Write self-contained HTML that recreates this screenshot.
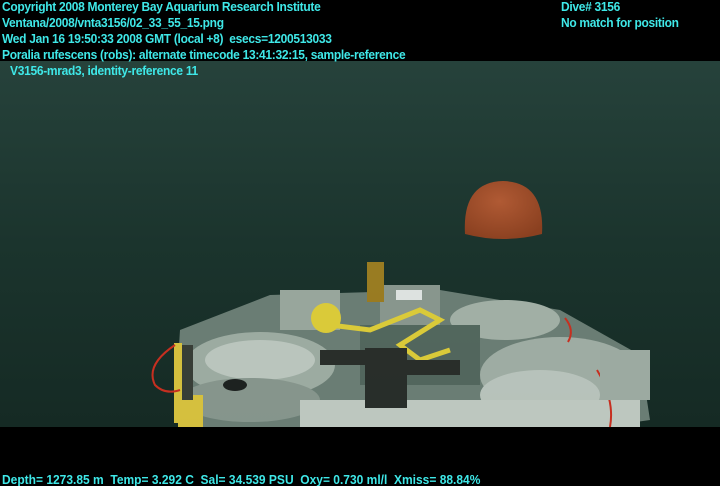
<!DOCTYPE html>
<html><head><meta charset="utf-8"><style>
html,body{margin:0;padding:0;background:#000;width:720px;height:486px;overflow:hidden;position:relative}
.t{position:absolute;font-family:"Liberation Sans",sans-serif;font-size:12px;color:#3fe8e8;font-weight:bold;letter-spacing:-0.3px;white-space:nowrap;line-height:14px;transform:scaleY(1.05)}
</style></head><body>
<svg width="720" height="486" style="position:absolute;left:0;top:0">
<defs>
<linearGradient id="w" x1="0" y1="0" x2="0" y2="1">
<stop offset="0" stop-color="#26423b"/><stop offset="0.5" stop-color="#1b342d"/><stop offset="1" stop-color="#152a24"/></linearGradient>
<radialGradient id="j" cx="0.45" cy="0.35" r="0.7"><stop offset="0" stop-color="#b05a34"/><stop offset="1" stop-color="#8a4020"/></radialGradient>
</defs>
<rect x="0" y="61" width="720" height="366" fill="url(#w)"/>
<path d="M465 234 Q462 182 503 181 Q545 182 542 234 Q503 244 465 234Z" fill="url(#j)"/>
<g opacity="0.95">
<path d="M180 330 L270 295 L440 290 L560 310 L640 355 L650 420 L600 427 L200 427 L175 410Z" fill="#6f8279"/>
<ellipse cx="260" cy="365" rx="75" ry="33" fill="#a4b2a8"/>
<ellipse cx="260" cy="360" rx="55" ry="20" fill="#c3cec6"/>
<ellipse cx="250" cy="400" rx="70" ry="22" fill="#8c9b92"/>
<ellipse cx="505" cy="320" rx="55" ry="20" fill="#a9b6ac"/>
<ellipse cx="560" cy="375" rx="80" ry="38" fill="#a6b3aa"/>
<ellipse cx="540" cy="395" rx="60" ry="25" fill="#c0cbc3"/>
<rect x="280" y="290" width="60" height="40" fill="#9fada3"/>
<rect x="380" y="285" width="60" height="40" fill="#8e9c93"/>
<rect x="360" y="325" width="120" height="60" fill="#566a60"/>
<rect x="300" y="400" width="340" height="27" fill="#c6d0c8"/>
<rect x="367" y="262" width="17" height="40" fill="#a08022"/>
<rect x="396" y="290" width="26" height="10" fill="#e8ecea"/>
<circle cx="326" cy="318" r="15" fill="#e5d33a"/>
<path d="M330 325 L370 330 L420 310 L440 320 L400 345 L420 360 L450 350" stroke="#e5d33a" stroke-width="5" fill="none"/>
<rect x="365" y="348" width="42" height="60" fill="#2a2f2b"/>
<rect x="320" y="350" width="50" height="15" fill="#2a2f2b"/>
<rect x="400" y="360" width="60" height="15" fill="#2a2f2b"/>
<rect x="178" y="395" width="25" height="32" fill="#e0c840"/>
<rect x="178" y="345" width="15" height="55" fill="#3a3f38"/>
<rect x="174" y="343" width="8" height="80" fill="#e0c840"/>
<ellipse cx="235" cy="385" rx="12" ry="6" fill="#1e2220"/>
<path d="M175 345 Q145 365 155 385 Q165 395 180 390" stroke="#d03020" stroke-width="2" fill="none"/>
<path d="M597 370 Q615 400 610 427" stroke="#d03020" stroke-width="2" fill="none"/>
<path d="M565 318 Q575 330 568 342" stroke="#d03020" stroke-width="2" fill="none"/>
<rect x="600" y="350" width="50" height="50" fill="#a4b1a8"/>
</g>
</svg>
<div class="t" style="left:2px;top:0">Copyright 2008 Monterey Bay Aquarium Research Institute</div>
<div class="t" style="left:2px;top:16px">Ventana/2008/vnta3156/02_33_55_15.png</div>
<div class="t" style="left:2px;top:32px">Wed Jan 16 19:50:33 2008 GMT (local +8)&nbsp; esecs=1200513033</div>
<div class="t" style="left:2px;top:48px">Poralia rufescens (robs): alternate timecode 13:41:32:15, sample-reference</div>
<div class="t" style="left:10px;top:64px">V3156-mrad3, identity-reference 11</div>
<div class="t" style="left:561px;top:0">Dive# 3156</div>
<div class="t" style="left:561px;top:16px">No match for position</div>
<div class="t" style="left:2px;top:473px;letter-spacing:0">Depth= 1273.85 m&nbsp; Temp= 3.292 C&nbsp; Sal= 34.539 PSU&nbsp; Oxy= 0.730 ml/l&nbsp; Xmiss= 88.84%</div>
</body></html>
